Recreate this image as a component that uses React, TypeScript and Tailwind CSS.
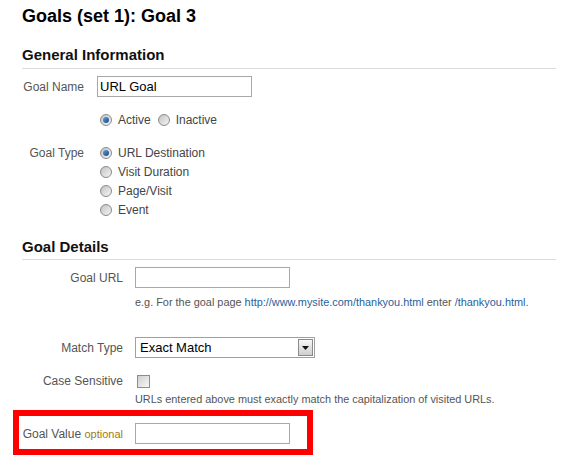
import type { ReactNode } from 'react';

// Goal editor form: "Goals (set 1): Goal 3" with the Goal Value row outlined in red.

const FONT = { fontFamily: '"Liberation Sans", Arial, sans-serif' };

function Radio({ checked = false }: { checked?: boolean }) {
  return (
    <span className="ml-[3px] flex h-[12px] w-[12px] shrink-0 items-center justify-center rounded-full border border-[#8a8a8a] bg-gradient-to-br from-[#c2c2c2] to-[#f6f6f6]">
      {checked && (
        <span className="h-[6px] w-[6px] rounded-full bg-gradient-to-br from-[#5f9fdc] to-[#174a86]" />
      )}
    </span>
  );
}

function RadioOption({ label, checked }: { label: string; checked?: boolean }) {
  return (
    <span className="flex h-[19px] items-center">
      <Radio checked={checked} />
      <span className="ml-[6px] text-[12px] leading-[14px] text-[#444]">{label}</span>
    </span>
  );
}

function TextBox({ value = '' }: { value?: string }) {
  return (
    <div className="flex h-[21px] w-[155px] items-center border border-[#a8a8a8] bg-white px-[2px] text-[13px] leading-[15px] text-black">
      {value}
    </div>
  );
}

function SectionHeading({ children, className }: { children: ReactNode; className: string }) {
  return (
    <h2 className={`border-b border-[#dcdcdc] text-[15px] leading-[18px] font-bold text-[#111] ${className}`}>
      {children}
    </h2>
  );
}

// Label column for "Goal Details" rows: right edge at x=123, control at x=135.
function DetailRow({ label, children, className = '' }: { label: ReactNode; children: ReactNode; className?: string }) {
  return (
    <div className={`flex items-center ${className}`}>
      <div className="w-[101px] shrink-0 text-right text-[12px] leading-[14px] text-[#555]">{label}</div>
      <div className="ml-[12px]">{children}</div>
    </div>
  );
}

export default function App() {
  return (
    <div className="min-h-[469px] bg-white pl-[22px] pr-[5px]" style={FONT}>
      <h1 className="pt-[5px] text-[18px] leading-[22px] font-bold text-black">Goals (set 1): Goal 3</h1>

      <SectionHeading className="mt-[19px] pb-[4px]">General Information</SectionHeading>

      <div className="mt-[7px] flex items-center">
        <div className="w-[62px] shrink-0 text-right text-[12px] leading-[14px] text-[#555]">Goal Name</div>
        <div className="ml-[13px]">
          <TextBox value="URL Goal" />
        </div>
      </div>

      <div className="mt-[13px] ml-[75px] flex">
        <RadioOption label="Active" checked />
        <span className="ml-[4px]">
          <RadioOption label="Inactive" />
        </span>
      </div>

      <div className="mt-[14px] flex">
        <div className="flex h-[19px] w-[62px] shrink-0 items-center justify-end text-[12px] leading-[14px] text-[#555]">
          Goal Type
        </div>
        <div className="ml-[13px] flex flex-col">
          <RadioOption label="URL Destination" checked />
          <RadioOption label="Visit Duration" />
          <RadioOption label="Page/Visit" />
          <RadioOption label="Event" />
        </div>
      </div>

      <SectionHeading className="mt-[19px] pb-[3px]">Goal Details</SectionHeading>

      <DetailRow label="Goal URL" className="mt-[7px]">
        <TextBox />
      </DetailRow>
      <p className="mt-[8px] ml-[113px] text-[10.9px] leading-[13px] whitespace-nowrap text-[#555]">
        e.g. For the goal page <span className="text-[#1f5f9e]">http://www.mysite.com/thankyou.html</span> enter{' '}
        <span className="text-[#1f5f9e]">/thankyou.html.</span>
      </p>

      <DetailRow label="Match Type" className="mt-[28px]">
        <div className="flex h-[21px] w-[180px] items-center justify-between border border-[#a0a0a0] bg-white pl-[4px] pr-[1px]">
          <span className="text-[13px] leading-[15px] text-black">Exact Match</span>
          <span className="flex h-[17px] w-[15px] items-center justify-center border border-[#8a8a8a] bg-gradient-to-b from-[#f6f6f6] to-[#cfcfcf]">
            <svg width="7" height="4" viewBox="0 0 7 4" aria-hidden="true">
              <path d="M0 0h7L3.5 4z" fill="#111" />
            </svg>
          </span>
        </div>
      </DetailRow>

      <DetailRow label="Case Sensitive" className="mt-[16px]">
        <span className="ml-[2px] block h-[13px] w-[13px] border border-[#8c8c8c] bg-gradient-to-br from-[#cfcfcf] to-[#f8f8f8]" />
      </DetailRow>
      <p className="mt-[5px] ml-[113px] text-[10.9px] leading-[13px] whitespace-nowrap text-[#555]">
        URLs entered above must exactly match the capitalization of visited URLs.
      </p>

      <div className="mt-[4px] -ml-[9px] w-[300px] border-[6px] border-[#ff0000] pt-[7px] pb-[5px] pl-[3px]">
        <DetailRow
          label={
            <>
              Goal Value <span className="text-[11px] text-[#a07a16]">optional</span>
            </>
          }
        >
          <TextBox />
        </DetailRow>
      </div>
    </div>
  );
}
